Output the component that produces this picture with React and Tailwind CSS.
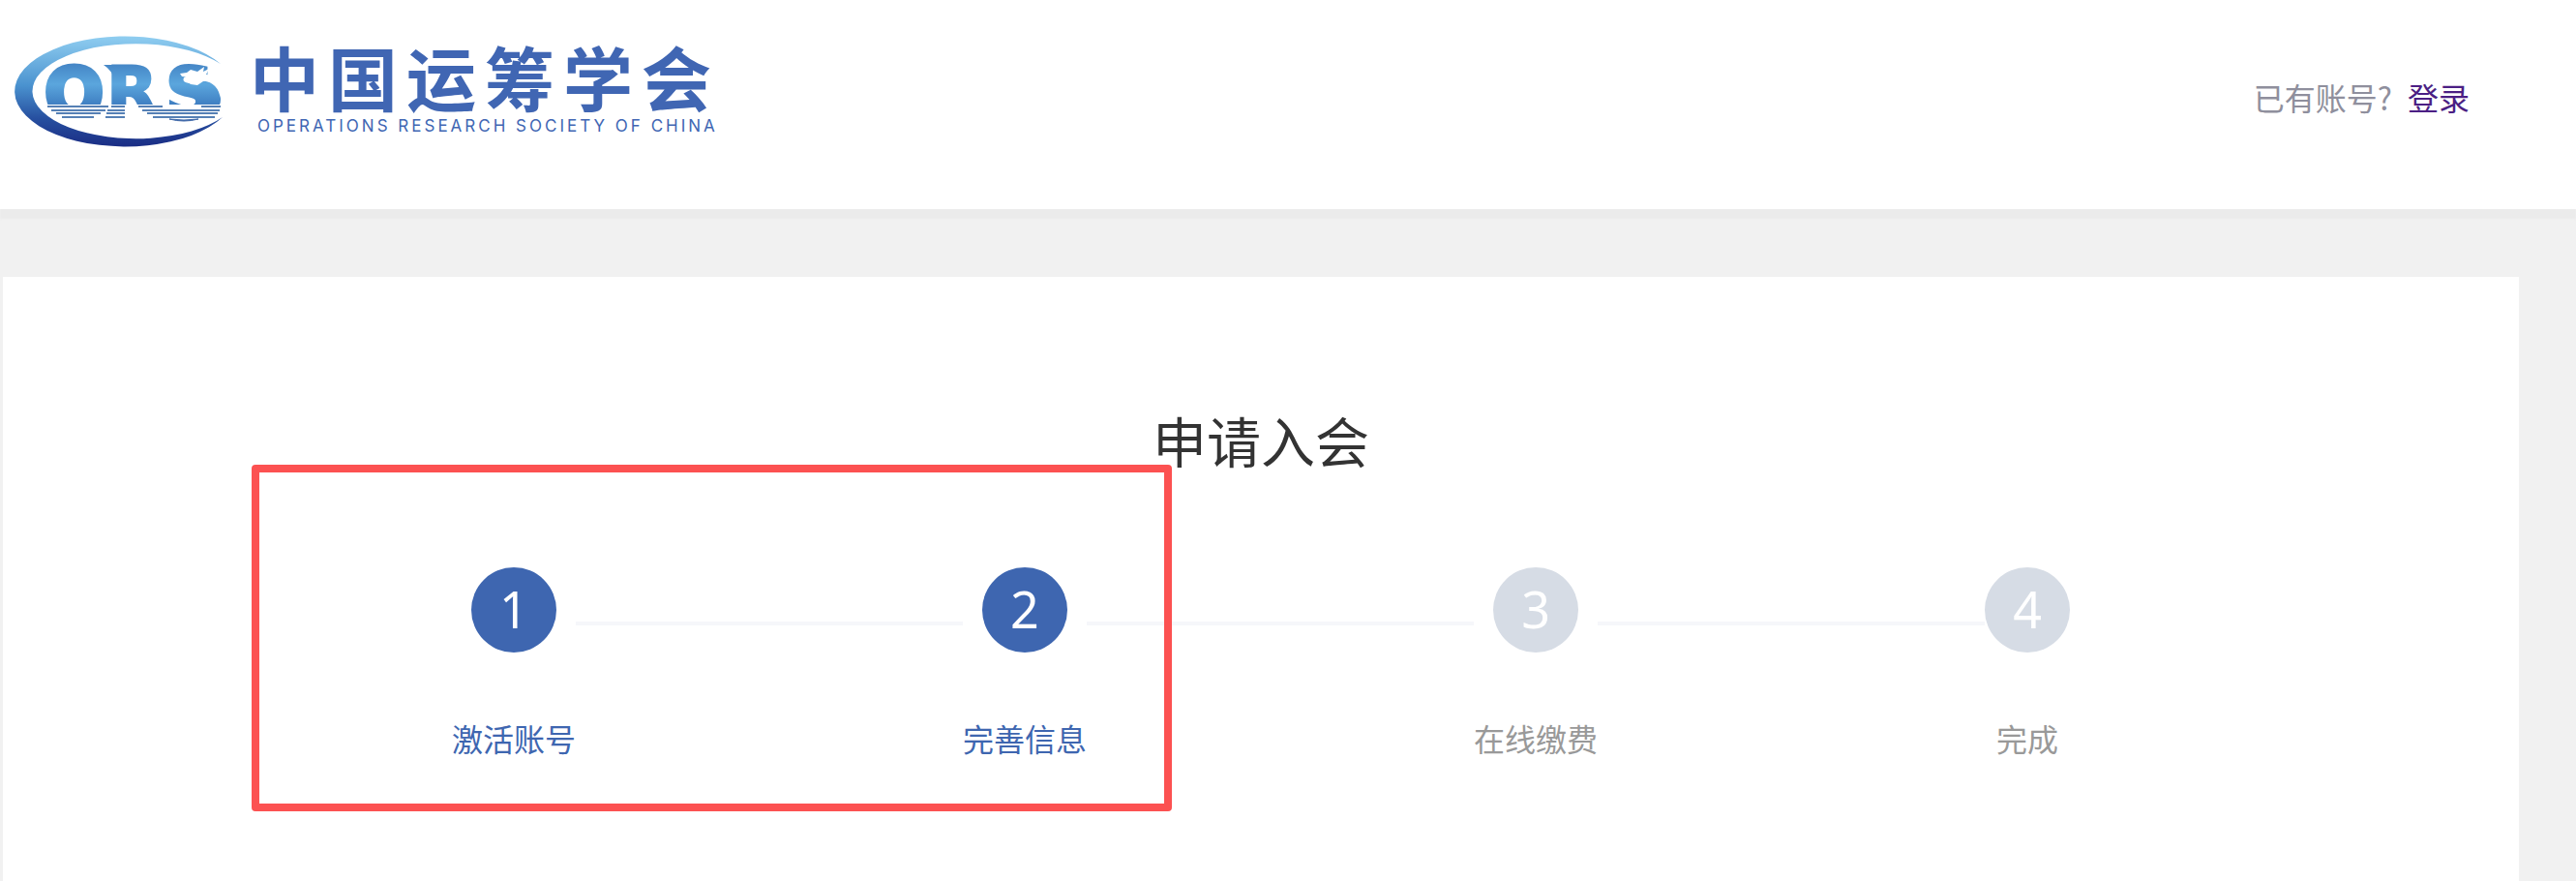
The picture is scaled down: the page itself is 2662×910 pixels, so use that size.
const steps = [
  { id: 1, label: "激活账号", active: true },
  { id: 2, label: "完善信息", active: true },
  { id: 3, label: "在线缴费", active: false },
  { id: 4, label: "完成", active: false },
];

function LogoMark() {
  return (
    <svg viewBox="0 20 250 150" className="h-[150px] w-[250px] shrink-0" role="img" aria-label="ORS">
      <defs>
        <linearGradient id="ring" gradientUnits="userSpaceOnUse" x1="0" y1="38" x2="0" y2="150">
          <stop offset="0" stopColor="#8fcdf0" />
          <stop offset="0.45" stopColor="#4a92cf" />
          <stop offset="0.75" stopColor="#2750a0" />
          <stop offset="1" stopColor="#1b2f86" />
        </linearGradient>
        <linearGradient id="letters" gradientUnits="userSpaceOnUse" x1="0" y1="66" x2="0" y2="108">
          <stop offset="0" stopColor="#4586c6" />
          <stop offset="0.5" stopColor="#5ba6dd" />
          <stop offset="1" stopColor="#3f7fc2" />
        </linearGradient>
        <clipPath id="waterline">
          <rect x="0" y="60" width="250" height="48" />
        </clipPath>
      </defs>
      <path d="M228 66 A114 57 0 1 0 230 121 A107 49 0 1 1 228 66 Z" fill="url(#ring)" />
      <g
        clipPath="url(#waterline)"
        fill="url(#letters)"
        stroke="url(#letters)"
        fontFamily="'DejaVu Sans', sans-serif"
        fontWeight="700"
      >
        <text x="46" y="121" fontSize="72" strokeWidth="5">O</text>
        <text x="110" y="118" fontSize="69" strokeWidth="2">R</text>
        <text x="171" y="119" fontSize="70" strokeWidth="3">S</text>
        <path d="M107 67 H120 V84 Q115 72 107 67 Z" stroke="none" />
        {/* dragon neck */}
        <path d="M198 84 Q222 80 227 98 Q229 103 227 108 H207 Q206 99 186 92 Z" stroke="none" />
      </g>
      {/* dragon head */}
      <path
        d="M186 76 L193 75 L197 72 L204 74 L211 69 L210 74 L216 71 L213 77 L221 78 L229 82 L229 87 L219 83 L210 84 L204 88 L197 87 L191 83 L197 80 L188 79 Z"
        fill="#fff"
      />
      {/* water stripes */}
      <path
        d="M49 110H112 M53 114H109 M58 117H104 M64 121H97 M115 110H129 M111 114H129 M110 117H129 M109 121H129 M143 110H168 M147 114H227 M152 117H225 M158 121H222 M208 110H228"
        stroke="#5580b5"
        strokeWidth="2"
        fill="none"
      />
      <path d="M175 123 Q190 127 205 123 Q190 125 175 123 Z" fill="#3f68a8" stroke="#3f68a8" />
    </svg>
  );
}

function Step({ step }) {
  return (
    <li className="flex flex-col items-center">
      <span
        className={`flex size-[88px] items-center justify-center rounded-full pb-0.5 font-['Noto_Sans'] text-[52px] leading-none text-white ${
          step.active ? "bg-[#3e66b0]" : "bg-[#d6dce5]"
        }`}
      >
        {step.id}
      </span>
      <span
        className={`mt-16 text-[32px] leading-12 whitespace-nowrap ${
          step.active ? "text-[#3e66b0]" : "text-[#999999]"
        }`}
      >
        {step.label}
      </span>
    </li>
  );
}

export default function App() {
  return (
    <div className="flex min-h-screen flex-col bg-[#f1f1f1] font-['Noto_Sans_CJK_SC',sans-serif]">
      <header className="flex items-start justify-between bg-white pt-5 pb-[46px] shadow-[0_10px_2px_#ebebeb]">
        <div className="flex">
          <LogoMark />
          <div className="flex flex-col gap-1 pt-[22px] pl-2 text-[#4066b3]">
            <span className="text-[72px] leading-18 font-bold tracking-[9px] whitespace-nowrap">中国运筹学会</span>
            <span className="pl-2 font-['Inter'] text-[17px] leading-6 tracking-[3px] whitespace-nowrap">
              OPERATIONS RESEARCH SOCIETY OF CHINA
            </span>
          </div>
        </div>
        <p className="mr-[110px] pt-14 text-[32px] leading-12 whitespace-nowrap text-[#8f8f9d]">
          已有账号?
          <a href="#login" className="ml-4 text-[#4b1f84]">
            登录
          </a>
        </p>
      </header>

      <main className="mt-[70px] mr-[59px] ml-[3px] grow bg-white pt-[126px]">
        <h1 className="text-center text-[56px] leading-21 text-[#333333]">申请入会</h1>
        <div className="mt-[90px] flex justify-center">
          <div className="relative">
            <ol className="flex">
              {steps.map((step, i) => (
                <div key={step.id} className="contents">
                  {i > 0 && <li aria-hidden="true" className="mt-14 h-1 w-[400px] bg-[#f6f7fa]" />}
                  <Step step={step} />
                </div>
              ))}
            </ol>
            <div className="pointer-events-none absolute -top-[106px] -left-[207px] h-[358px] w-[951px] rounded-sm border-8 border-[#fc5151]" />
          </div>
        </div>
      </main>
    </div>
  );
}
